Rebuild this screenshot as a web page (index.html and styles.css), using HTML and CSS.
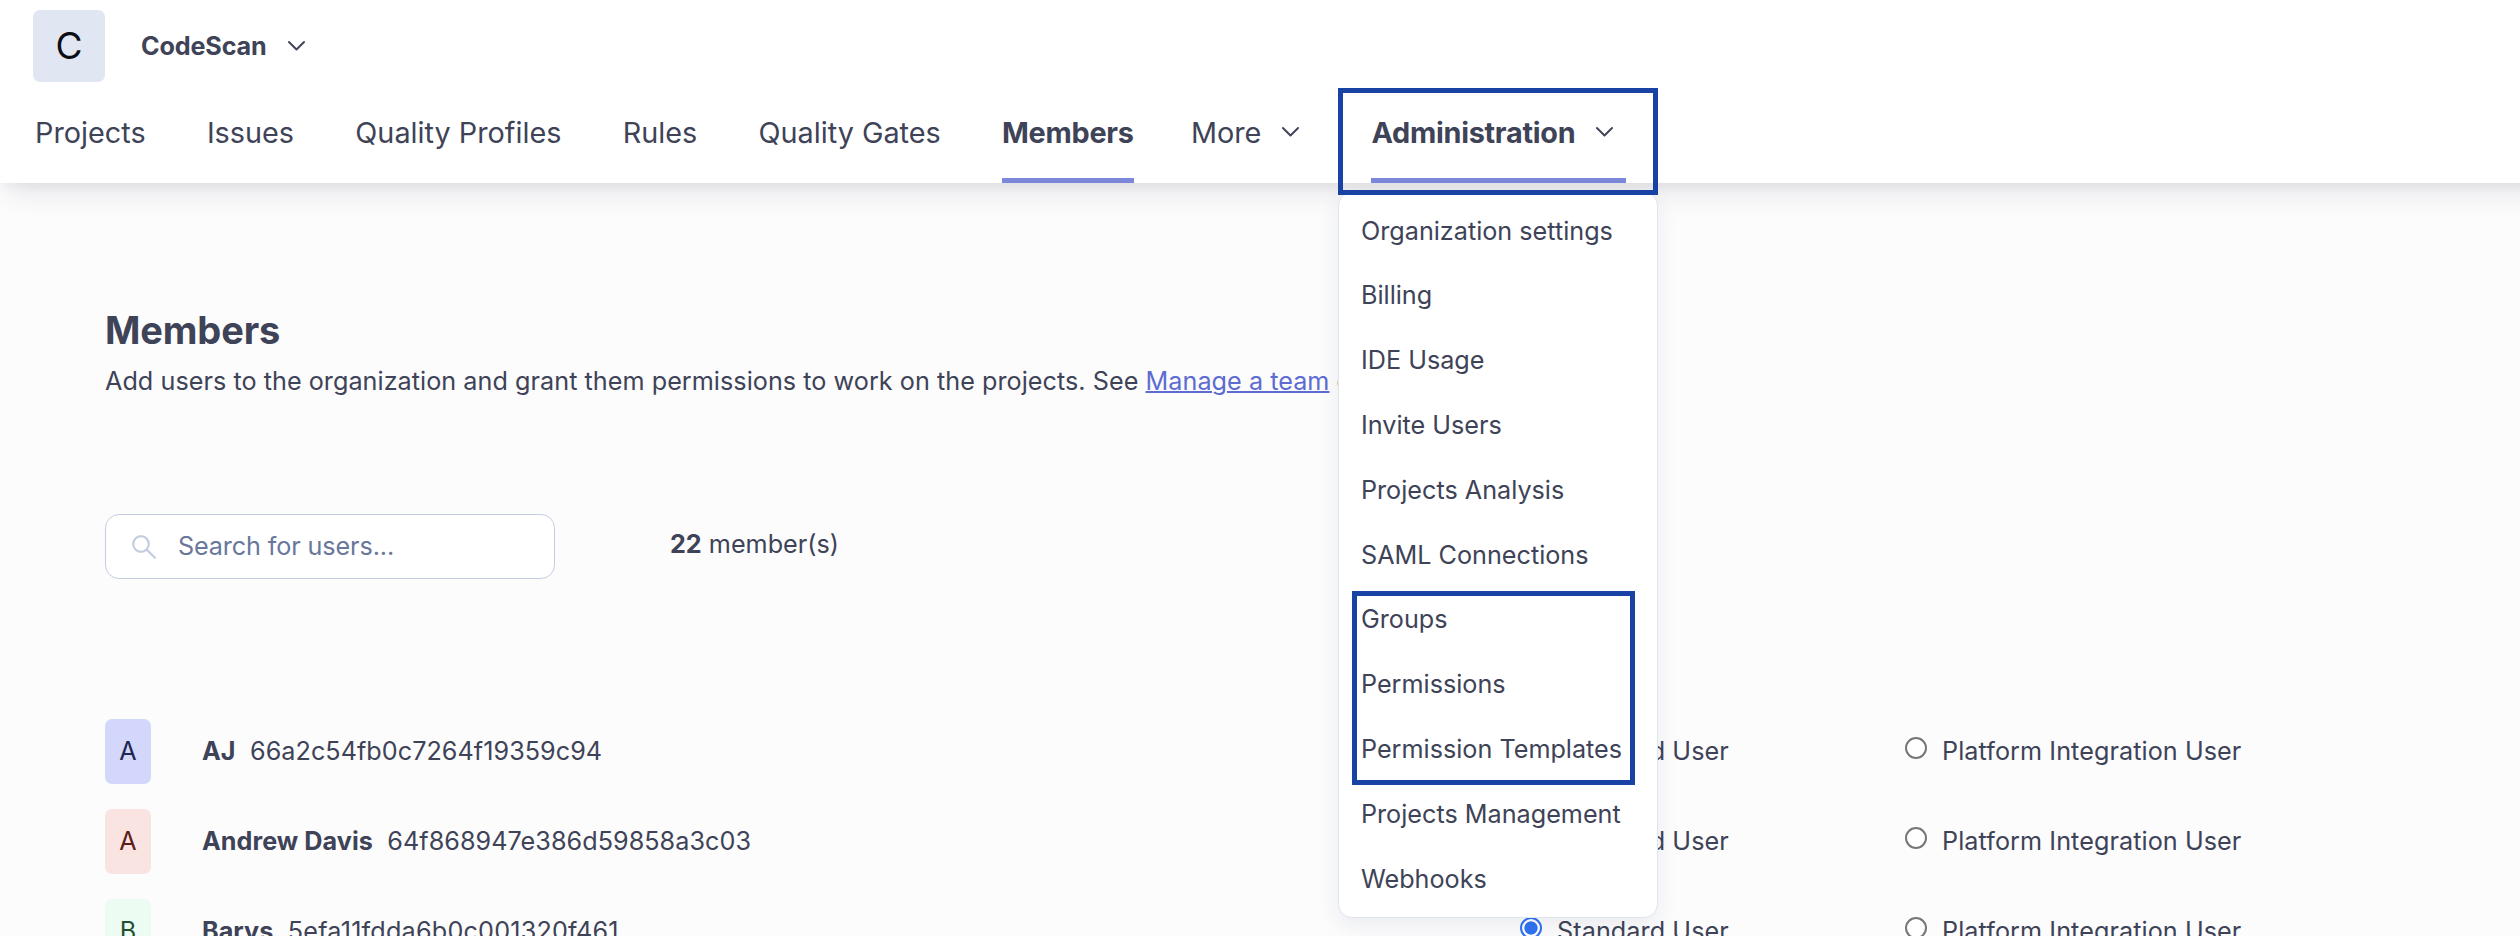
FILE: index.html
```html
<!DOCTYPE html>
<html lang="en">
<head>
<meta charset="utf-8">
<title>CodeScan - Members</title>
<link rel="stylesheet" href="styles.css">
</head>
<body>
<header class="header">
  <div class="org">
    <span class="org-avatar">C</span>
    <span class="org-name">CodeScan</span>
    <svg class="chevron" viewBox="0 0 18 10"><path d="M1 1l8 8 8-8"/></svg>
  </div>
  <nav class="nav">
    <a class="tab">Projects</a>
    <a class="tab">Issues</a>
    <a class="tab">Quality Profiles</a>
    <a class="tab">Rules</a>
    <a class="tab">Quality Gates</a>
    <a class="tab active">Members</a>
    <a class="tab more">More <svg class="chevron" viewBox="0 0 18 10"><path d="M1 1l8 8 8-8"/></svg></a>
    <div class="admin">
      <a class="tab active">Administration <svg class="chevron" viewBox="0 0 18 10"><path d="M1 1l8 8 8-8"/></svg></a>
      <div class="admin-outline"></div>
      <ul class="menu">
        <li>Organization settings</li>
        <li>Billing</li>
        <li>IDE Usage</li>
        <li>Invite Users</li>
        <li>Projects Analysis</li>
        <li>SAML Connections</li>
        <li class="marked">Groups<div class="group-outline"></div></li>
        <li>Permissions</li>
        <li>Permission Templates</li>
        <li>Projects Management</li>
        <li>Webhooks</li>
      </ul>
    </div>
  </nav>
</header>
<main class="page">
  <h1 class="title">Members</h1>
  <p class="description">Add users to the organization and grant them permissions to work on the projects. See <a class="link">Manage a team</a> documentation.</p>
  <div class="filters">
    <div class="search">
      <svg class="search-icon" viewBox="0 0 24 24"><circle cx="9" cy="9" r="7.8"/><path d="M14.6 14.6l8.4 8.2"/></svg>
      <span class="placeholder">Search for users...</span>
    </div>
    <div class="count"><b>22</b> member(s)</div>
  </div>
  <div class="members">
    <div class="member">
      <span class="avatar indigo">A</span>
      <div class="identity"><b>AJ</b><span>66a2c54fb0c7264f19359c94</span></div>
      <div class="role"><i class="radio checked"></i>Standard User</div>
      <div class="role"><i class="radio"></i>Platform Integration User</div>
    </div>
    <div class="member">
      <span class="avatar red">A</span>
      <div class="identity"><b>Andrew Davis</b><span>64f868947e386d59858a3c03</span></div>
      <div class="role"><i class="radio checked"></i>Standard User</div>
      <div class="role"><i class="radio"></i>Platform Integration User</div>
    </div>
    <div class="member">
      <span class="avatar green">B</span>
      <div class="identity"><b>Barys</b><span class="loose">5efa11fdda6b0c001320f461</span></div>
      <div class="role"><i class="radio checked"></i>Standard User</div>
      <div class="role"><i class="radio"></i>Platform Integration User</div>
    </div>
  </div>
</main>
</body>
</html>
```
FILE: styles.css
```css
* { box-sizing: border-box; }
body {
  margin: 0;
  height: 936px;
  overflow: hidden;
  background: #fcfcfd;
  color: #3e4357;
  font: 400 25.2px/36px Inter, sans-serif;
}
b { font-weight: 700; }
.header {
  position: relative;
  z-index: 1;
  width: calc(100% + 60px);
  height: 183px;
  padding-top: 10px;
  background: #fff;
  box-shadow: 0 18px 27px -9px rgba(29, 33, 47, .1), 0 7px 11px -4px rgba(29, 33, 47, .06);
}
.org { display: flex; align-items: center; height: 72px; padding-left: 33px; }
.org-avatar {
  width: 72px;
  height: 72px;
  border-radius: 7px;
  background: #e1e6f3;
  color: #0c0e14;
  font-size: 37px;
  line-height: 72px;
  text-align: center;
}
.org-name { margin-left: 36px; font-weight: 700; letter-spacing: -.15px; }
.chevron {
  flex: none;
  width: 17px;
  height: 9.5px;
  margin-left: 21px;
  overflow: visible;
  fill: none;
  stroke: #3e4357;
  stroke-width: 2;
  stroke-linecap: round;
  stroke-linejoin: round;
}
.nav { display: flex; gap: 61.3px; height: 101px; padding-left: 35px; }
.tab {
  display: flex;
  align-items: center;
  height: 101px;
  padding-top: 6px;
  border-bottom: 5px solid transparent;
  font-size: 28.8px;
  white-space: nowrap;
}
.tab .chevron { position: relative; top: -1px; }
.tab.active { border-color: #7b87d9; font-weight: 700; letter-spacing: -.26px; }
.more { margin-left: -4px; }
.admin { position: relative; margin-left: 10.8px; }
.admin .tab { width: 255px; }
.admin-outline {
  position: absolute;
  z-index: 2;
  left: -33px;
  top: 6px;
  width: 320px;
  height: 107px;
  border: 5px solid #1942a5;
}
.menu {
  position: absolute;
  left: -33px;
  top: 110px;
  width: 320px;
  height: 726px;
  margin: 0;
  padding: 5.6px 0 0 21.5px;
  border: 1px solid #dfe4f3;
  border-radius: 14px;
  background: #fff;
  box-shadow: 0 7px 22px rgba(29, 33, 47, .08);
  list-style: none;
}
.menu li { height: 64.8px; line-height: 64.8px; white-space: nowrap; }
.marked { position: relative; }
.group-outline {
  position: absolute;
  left: -9px;
  top: 3.4px;
  width: 283px;
  height: 194px;
  border: 5px solid #1942a5;
}
.page { height: 753px; overflow: hidden; padding: 123px 0 0 105px; }
.title { margin: 0; font-size: 38px; line-height: 48px; font-weight: 700; letter-spacing: -.12px; }
.description { margin: 9px 0 0; white-space: nowrap; letter-spacing: .035px; }
.link { color: #5d6cd0; text-decoration: underline; text-decoration-thickness: 2px; }
.filters { display: flex; align-items: center; margin-top: 115px; }
.search {
  display: flex;
  align-items: center;
  width: 450px;
  height: 65px;
  padding-left: 26px;
  border: 1.5px solid #c5cde0;
  border-radius: 14px;
  background: #fff;
  color: #69779b;
}
.placeholder { padding-bottom: 2px; letter-spacing: -.12px; }
.search-icon { width: 24px; height: 24px; margin-right: 22px; fill: none; stroke: #c5cde0; stroke-width: 2.2; stroke-linecap: round; }
.count { margin-left: 115px; padding-bottom: 6px; }
.members { margin-top: 140px; }
.member {
  display: grid;
  grid-template-columns: 97px 1318px 385px 1fr;
  align-items: center;
  height: 65px;
  margin-bottom: 25px;
}
.avatar { width: 46px; height: 65px; border-radius: 7px; line-height: 65px; text-align: center; }
.indigo { background: #d3d7fc; color: #20264f; }
.red { background: #fae4e2; color: #5c1e19; }
.green { background: #edfcf2; color: #1f5130; }
.identity { display: flex; gap: 14.4px; padding-bottom: 2px; letter-spacing: .04px; }
.loose { letter-spacing: .2px; }
.role { display: flex; align-items: center; gap: 15px; padding-bottom: 2px; white-space: nowrap; letter-spacing: .07px; }
.radio {
  position: relative;
  top: -3px;
  width: 22px;
  height: 22px;
  border: 2px solid #767676;
  border-radius: 50%;
  background: #fff;
}
.radio.checked { border-color: #2f73f2; background: radial-gradient(circle, #2f73f2 6.2px, #fff 7px); }
```
